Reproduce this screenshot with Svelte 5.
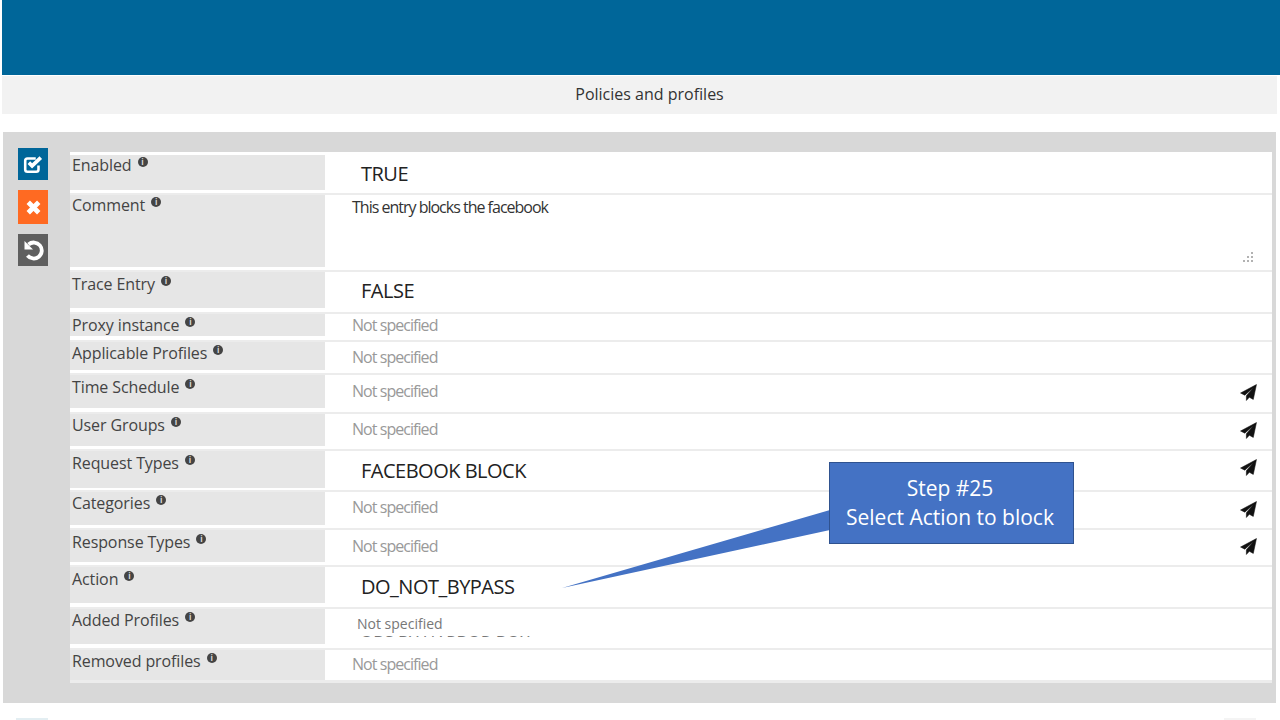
<script>
  const rows = [
    { label: 'Enabled', h: 40, cell: 35, lt: 0, value: 'TRUE', kind: 'big', vt: 5 },
    { label: 'Comment', h: 77, cell: 72, lt: 0, value: 'This entry blocks the facebook', kind: 'comment', vt: 2 },
    { label: 'Trace Entry', h: 42, cell: 36, lt: 2, value: 'FALSE', kind: 'big', vt: 5 },
    { label: 'Proxy instance', h: 28, cell: 22, lt: 1, value: 'Not specified', kind: 'none', vt: 1 },
    { label: 'Applicable Profiles', h: 33, cell: 28, lt: 1, value: 'Not specified', kind: 'none', vt: 5 },
    { label: 'Time Schedule', h: 39, cell: 33, lt: 2, value: 'Not specified', kind: 'none', vt: 6, send: 9 },
    { label: 'User Groups', h: 37, cell: 32, lt: 1, value: 'Not specified', kind: 'none', vt: 5, send: 8 },
    { label: 'Request Types', h: 41, cell: 37, lt: 2, value: 'FACEBOOK BLOCK', kind: 'big', vt: 6, send: 8 },
    { label: 'Categories', h: 38, cell: 33, lt: 1, value: 'Not specified', kind: 'none', vt: 5, send: 9 },
    { label: 'Response Types', h: 37, cell: 32, lt: 2, value: 'Not specified', kind: 'none', vt: 6, send: 8 },
    { label: 'Action', h: 42, cell: 36, lt: 2, value: 'DO_NOT_BYPASS', kind: 'big', vt: 6 },
    { label: 'Added Profiles', h: 41, cell: 35, lt: 1, value: 'Not specified', kind: 'added', vt: 6 },
    { label: 'Removed profiles', h: 33, cell: 30, lt: 1, value: 'Not specified', kind: 'none', vt: 4 }
  ];
</script>

<div class="page">
  <header class="topbar"></header>
  <div class="subbar">Policies and profiles</div>

  <section class="panel">
    <div class="actions">
      <button class="act save" aria-label="Save">
        <svg viewBox="0 0 24 24" width="22" height="22" fill="none" stroke="#fff">
          <path d="M18 13.500V18a2.500 2.500 0 0 1-2.500 2.500H6A2.500 2.500 0 0 1 3.500 18V8.500A2.500 2.500 0 0 1 6 6h9" stroke-width="2.800" />
          <path d="M7.500 10.500l3.500 3.500L20.500 5" stroke-width="4" />
        </svg>
      </button>
      <button class="act cancel" aria-label="Cancel">
        <svg viewBox="0 0 24 24" width="21" height="21" fill="none" stroke="#fff" stroke-width="5.500">
          <path d="M6 6l12 12M18 6L6 18" />
        </svg>
      </button>
      <button class="act reset" aria-label="Reset">
        <svg viewBox="0 0 24 24" width="24" height="24" fill="none" stroke="#fff" stroke-width="3.800">
          <path d="M7.500 6.500a8 8 0 1 1-1 11" />
          <path d="M3.500 3v8.500H12z" fill="#fff" stroke="none" />
        </svg>
      </button>
    </div>

    <div class="form">
      {#each rows as row}
        <div class="row" style:height="{row.h}px">
          <div class="label" style:height="{row.cell}px" style:padding-top="{row.lt}px">
            {row.label}<span class="info">i</span>
          </div>
          {#if row.kind === 'added'}
            <div class="value added" style:top="{row.vt}px">
              <span>{row.value}</span>
              <span class="cut">OBS BY HARBOR BOX</span>
            </div>
          {:else}
            <div class="value {row.kind}" style:top="{row.vt}px">{row.value}</div>
          {/if}
          {#if row.kind === 'comment'}
            <svg class="grip" viewBox="0 0 12 12" width="12" height="12" fill="#999">
              <circle cx="10" cy="2" r="1" /><circle cx="10" cy="6" r="1" /><circle cx="10" cy="10" r="1" />
              <circle cx="6" cy="6" r="1" /><circle cx="6" cy="10" r="1" /><circle cx="2" cy="10" r="1" />
            </svg>
          {/if}
          {#if row.send}
            <svg class="send" style:top="{row.send}px" viewBox="0 0 16 16" width="17" height="17">
              <path d="M15.500 0.500 L0.500 8.500 L4.500 10.500 L12.500 3.500 L6 11 L6 15.500 L8.800 12.500 L12.500 14.500 Z" fill="#111" stroke="#111" stroke-width="0.500" />
            </svg>
          {/if}
        </div>
      {/each}
    </div>
  </section>

  <footer class="footer">
    <span class="chip left"></span>
    <span class="chip right"></span>
  </footer>

  <div class="callout">
    <svg class="tail" viewBox="0 0 270 80" width="270" height="80">
      <path d="M0 78 L268 0 L268 20 Z" fill="#4472c4" />
    </svg>
    <div class="box">Step #25<br />Select Action to block</div>
  </div>
</div>

<style>
  :global(body) {
    margin: 0;
    background: #fff;
  }

  .page {
    position: relative;
    width: 1280px;
    height: 720px;
    overflow: hidden;
    background: #fff;
    font-family: 'Open Sans', 'Noto Sans', sans-serif;
  }

  .topbar {
    height: 75px;
    margin-left: 2px;
    background: #006699;
  }

  .subbar {
    width: 1275px;
    height: 38px;
    margin: 1px 0 0 2px;
    box-sizing: border-box;
    padding-left: 20px;
    background: #f2f2f2;
    color: #333;
    font-size: 16px;
    line-height: 37px;
    text-align: center;
  }

  .panel {
    display: flex;
    align-items: flex-start;
    width: 1273px;
    height: 571px;
    margin: 18px 0 0 3px;
    box-sizing: border-box;
    padding: 20px 4px 0 15px;
    background: #d8d8d8;
  }

  .actions {
    display: flex;
    flex-direction: column;
    gap: 10px;
    width: 52px;
    flex: none;
    margin-top: -4px;
  }

  .act {
    display: flex;
    align-items: center;
    justify-content: center;
    width: 30px;
    height: 32px;
    padding: 0;
    border: 0;
  }

  .save { background: #006699; }
  .cancel { background: #ff6a22; height: 34px; }
  .reset { background: #5f5f5f; }

  .form {
    flex: 1;
    background: #fff;
    padding-top: 3px;
  }

  .row {
    position: relative;
    box-sizing: border-box;
    border-bottom: 2px solid #ececec;
  }

  .row:last-child {
    border-bottom-width: 3px;
  }

  .label {
    width: 255px;
    box-sizing: border-box;
    padding-left: 2px;
    background: #e6e6e6;
    color: #444;
    font-size: 16px;
    letter-spacing: -0.1px;
    line-height: 20px;
  }

  .info {
    display: inline-block;
    width: 10px;
    height: 10px;
    margin-left: 6px;
    border-radius: 50%;
    background: #444;
    color: #ddd;
    font-size: 8px;
    font-weight: 700;
    line-height: 10px;
    text-align: center;
    vertical-align: 6px;
  }

  .value {
    position: absolute;
    left: 282px;
    white-space: nowrap;
  }

  .big {
    left: 291px;
    color: #222;
    font-size: 20px;
    line-height: 27px;
    letter-spacing: -0.5px;
  }

  .comment {
    color: #333;
    font-size: 16px;
    line-height: 20px;
    letter-spacing: -1px;
  }

  .none {
    color: #999;
    font-size: 16px;
    letter-spacing: -0.95px;
    line-height: 20px;
  }

  .added {
    left: 287px;
    height: 22px;
    overflow: hidden;
    color: #777;
    font-size: 14px;
    line-height: 18px;
  }

  .added span {
    display: block;
  }

  .added .cut {
    margin-left: 3px;
    color: #777;
    font-size: 17px;
  }

  .grip {
    position: absolute;
    top: 56px;
    right: 18px;
  }

  .send {
    position: absolute;
    right: 15px;
  }

  .footer {
    display: flex;
    justify-content: space-between;
    margin-top: 15px;
    padding: 0 24px 0 16px;
  }

  .chip {
    width: 32px;
    height: 2px;
    background: #e3eef2;
  }

  .chip.right {
    background: #f4f4f4;
  }

  .callout {
    position: absolute;
    left: 562px;
    top: 462px;
  }

  .tail {
    position: absolute;
    left: 0;
    top: 48px;
    display: block;
  }

  .box {
    position: relative;
    box-sizing: border-box;
    width: 245px;
    height: 82px;
    margin-left: 267px;
    padding: 11px 3px 0 0;
    border: 1px solid #2f528f;
    background: #4472c4;
    color: #fff;
    font-size: 21px;
    line-height: 29px;
    text-align: center;
  }
</style>
